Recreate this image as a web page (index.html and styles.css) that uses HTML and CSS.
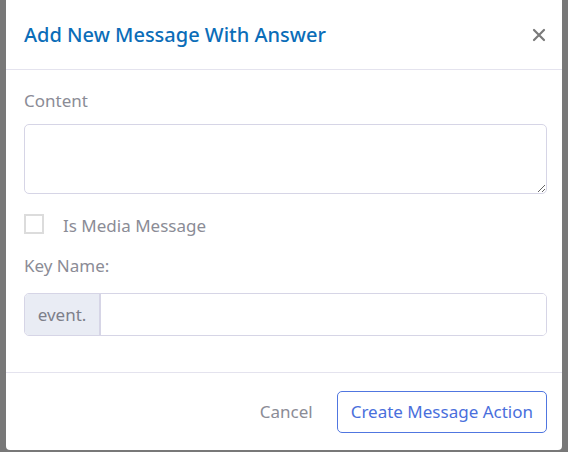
FILE: index.html
```html
<!DOCTYPE html>
<html>
<head>
<meta charset="utf-8">
<link rel="stylesheet" href="styles.css">
</head>
<body>
<div class="modal">
  <div class="modal-header">
    <h2 class="modal-title">Add New Message With Answer</h2>
    <button class="close" type="button" aria-label="Close">
      <svg width="14" height="14" viewBox="0 0 14 14"><path d="M2 2 L12 12 M12 2 L2 12" stroke="#7a7a7a" stroke-width="2.2" stroke-linecap="round"/></svg>
    </button>
  </div>
  <div class="modal-body">
    <label class="label">Content</label>
    <textarea class="textarea"></textarea>
    <div class="check-row">
      <span class="checkbox"></span>
      <span class="check-label">Is Media Message</span>
    </div>
    <label class="label key-label">Key Name:</label>
    <div class="input-group">
      <span class="addon">event.</span>
      <input class="input" type="text">
    </div>
  </div>
  <div class="modal-footer">
    <button class="btn-cancel" type="button">Cancel</button>
    <button class="btn-primary" type="button">Create Message Action</button>
  </div>
</div>
</body>
</html>
```
FILE: styles.css
```css
html, body {
  margin: 0;
  padding: 0;
  background: #787878;
  height: 452px;
  overflow: hidden;
}
body {
  font-family: "Noto Sans", "Open Sans", sans-serif;
}
.modal {
  margin: 0 6px 0 6px;
  width: 556px;
  height: 450px;
  background: #fff;
  border-radius: 0 0 4px 4px;
  display: flex;
  flex-direction: column;
  box-sizing: border-box;
}
.modal-header {
  height: 70px;
  box-sizing: border-box;
  border-bottom: 1px solid #e4e3ee;
  display: flex;
  align-items: center;
  justify-content: space-between;
  padding: 0 16px 0 18px;
}
.modal-title {
  margin: 0;
  font-size: 20px;
  font-weight: 500;
  color: #0b6db8;
}
.close {
  background: none;
  border: 0;
  padding: 0;
  width: 14px;
  height: 14px;
  display: flex;
}
.modal-body {
  padding: 19px 15px 36px 18px;
  display: flex;
  flex-direction: column;
  border-bottom: 1px solid #e4e3ee;
}
.label {
  font-size: 17px;
  line-height: 24px;
  color: #8b8c96;
}
.textarea {
  margin-top: 11px;
  height: 70px;
  box-sizing: border-box;
  border: 1px solid #d6d5e6;
  border-radius: 5px;
  resize: vertical;
  font: inherit;
}
.check-row {
  margin-top: 20px;
  display: flex;
  align-items: center;
  height: 20px;
}
.checkbox {
  width: 20px;
  height: 20px;
  box-sizing: border-box;
  border: 2px solid #dcdcdc;
}
.check-label {
  margin-left: 19px;
  font-size: 17px;
  color: #8b8c96;
  position: relative;
  top: 1px;
}
.key-label {
  margin-top: 20px;
}
.input-group {
  margin-top: 15px;
  display: flex;
  height: 43px;
  box-sizing: border-box;
  border: 1px solid #d6d5e6;
  border-radius: 5px;
  overflow: hidden;
}
.addon {
  width: 76px;
  box-sizing: border-box;
  background: #e9ecf4;
  border-right: 2px solid #d6d5e6;
  display: flex;
  align-items: center;
  justify-content: center;
  font-size: 17px;
  color: #7d7f8a;
}
.input {
  flex: 1;
  border: 0;
  outline: none;
  font: inherit;
}
.modal-footer {
  flex: 1;
  display: flex;
  align-items: center;
  justify-content: flex-end;
  padding: 0 15px 0 18px;
}
.btn-cancel {
  background: none;
  border: 0;
  font: inherit;
  font-size: 17px;
  color: #8b8c96;
  padding: 0;
  margin-right: 24px;
}
.btn-primary {
  height: 42px;
  padding: 0 13px;
  background: #fff;
  border: 1px solid #5076e0;
  border-radius: 5px;
  font: inherit;
  font-size: 17px;
  color: #4a6fdc;
}
```
